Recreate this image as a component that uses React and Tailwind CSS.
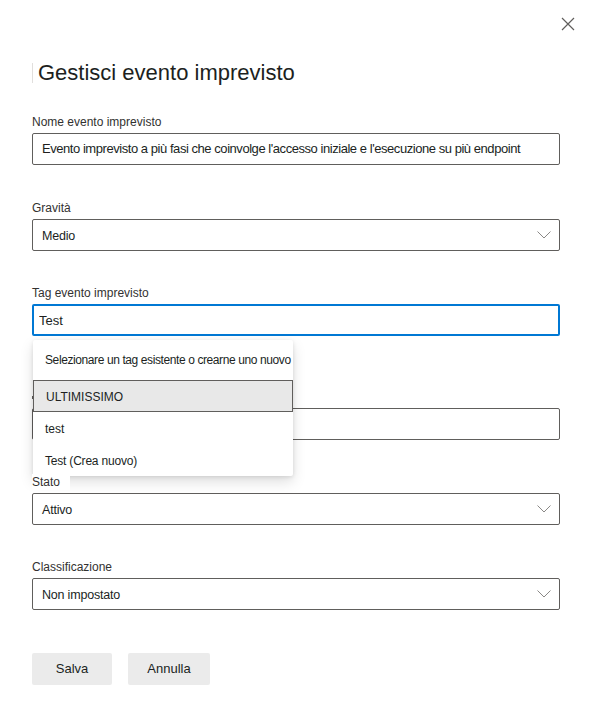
import { useState } from "react";

function Chevron() {
  return (
    <svg width="14" height="8" viewBox="0 0 14 8" fill="none" className="shrink-0">
      <path d="M0.5 0.5L7 7L13.5 0.5" stroke="#8a8886" strokeWidth="1" />
    </svg>
  );
}

function Label({ children, className = "" }) {
  return (
    <div className={"h-4 mb-[3px] text-[12px] leading-4 text-[#323130] " + className}>
      {children}
    </div>
  );
}

function Select({ value }) {
  return (
    <div className="h-8 border border-[#605e5c] rounded-[2px] flex items-center justify-between pl-[9px] pr-2 text-[12.5px] tracking-[-0.2px] text-[#201f1e]">
      <span className="pt-[2px]">{value}</span>
      <Chevron />
    </div>
  );
}

export default function App() {
  const [tag, setTag] = useState("Test");

  return (
    <div
      className="w-[592px] h-[701px] bg-white relative overflow-hidden"
      style={{ fontFamily: '"Liberation Sans", Arial, sans-serif' }}
    >
      {/* close */}
      <div className="flex justify-end pt-[17px] pr-[17px]">
        <svg width="14" height="14" viewBox="0 0 14 14" fill="none">
          <path d="M1 1L13 13M13 1L1 13" stroke="#605e5c" strokeWidth="1.2" />
        </svg>
      </div>

      <div className="px-8">
        <h1 className="mt-[28px] flex items-center text-[22px] leading-7 text-[#201f1e]">
          <span className="w-px h-5 bg-[#e1dfdd] mr-[5px]" />
          Gestisci evento imprevisto
        </h1>

        {/* Nome */}
        <div className="mt-[27px]">
          <Label>Nome evento imprevisto</Label>
          <div className="h-8 border border-[#605e5c] rounded-[2px] flex items-center pl-[9px] text-[13px] text-[#201f1e] tracking-[-0.45px] whitespace-nowrap">
            Evento imprevisto a più fasi che coinvolge l'accesso iniziale e l'esecuzione su più endpoint
          </div>
        </div>

        {/* Gravità */}
        <div className="mt-[35px]">
          <Label>Gravità</Label>
          <Select value="Medio" />
        </div>

        {/* Tag */}
        <div className="mt-[34px] relative">
          <Label>Tag evento imprevisto</Label>
          <input
            value={tag}
            onChange={(e) => setTag(e.target.value)}
            className="w-full h-8 border-2 border-[#0078d4] rounded-[2px] pl-[5px] text-[13px] text-[#201f1e] outline-none"
          />
          <div className="h-[19px]" />

          {/* dropdown */}
          <div className="absolute left-[1px] top-[55px] w-[260px] bg-white z-10 shadow-[0_6px_14px_rgba(0,0,0,0.13),0_1px_4px_rgba(0,0,0,0.11)] rounded-[2px]">
            <div className="h-10 flex items-center pl-3 text-[12px] tracking-[-0.4px] whitespace-nowrap text-[#201f1e]">
              Selezionare un tag esistente o crearne uno nuovo
            </div>
            <div className="h-8 flex items-center pl-3 pt-[2px] bg-[#e8e8e8] border border-[#605e5c] text-[12px] text-[#201f1e]">
              ULTIMISSIMO
            </div>
            <div className="h-8 flex items-center pl-3 pt-[2px] text-[12px] text-[#201f1e]">test</div>
            <div className="h-8 flex items-center pl-3 pt-[2px] text-[12px] tracking-[-0.2px] text-[#201f1e]">Test (Crea nuovo)</div>
          </div>
        </div>

        {/* field under dropdown (label hidden by the menu) */}
        <div className="mt-[34px]">
          <div className="h-4 mb-[3px] flex items-center">
            <span className="w-[2px] h-[3px] bg-[#605e5c]" />
          </div>
          <div className="h-8 border border-[#605e5c] rounded-[2px]" />
        </div>

        {/* Stato */}
        <div className="mt-[34px]">
          <Label className="relative z-20 bg-white w-[38px]">Stato</Label>
          <Select value="Attivo" />
        </div>

        {/* Classificazione */}
        <div className="mt-[34px]">
          <Label>Classificazione</Label>
          <Select value="Non impostato" />
        </div>

        <div className="mt-[43px] flex gap-4">
          <button className="w-20 h-8 bg-[#ebebeb] rounded-[2px] text-[13px] text-[#201f1e]">Salva</button>
          <button className="w-[82px] h-8 bg-[#ebebeb] rounded-[2px] text-[13px] text-[#201f1e]">Annulla</button>
        </div>
      </div>
    </div>
  );
}
